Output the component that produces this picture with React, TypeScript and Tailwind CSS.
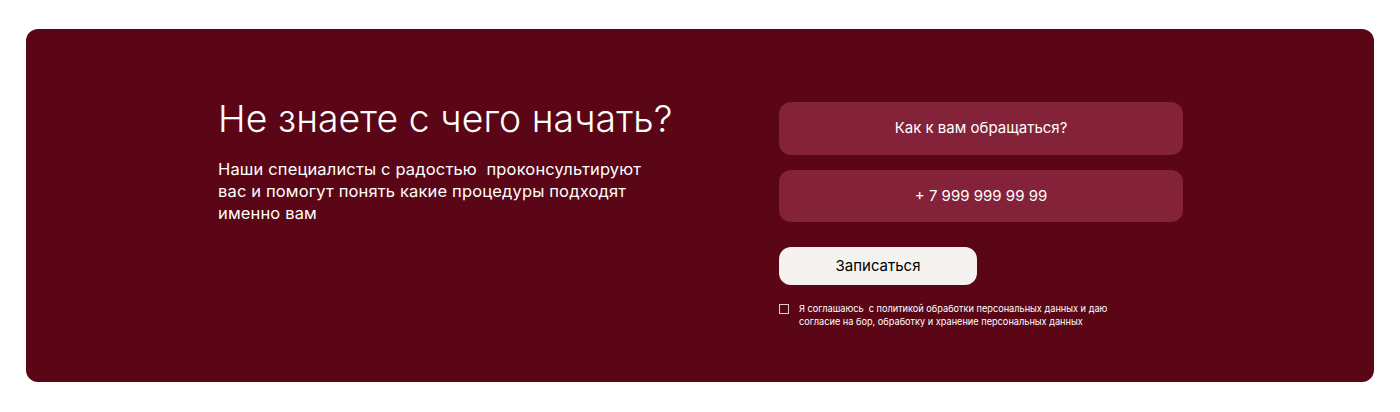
export default function App() {
  return (
    <div className="w-[1400px] h-[412px] bg-white pt-[29px] px-[26px]" style={{ fontFamily: "Inter, 'Noto Sans', sans-serif" }}>
      <div className="h-[353px] rounded-[12px] bg-[#5a0616] flex pl-[192px] pt-[73px]">
        <div className="w-[561px] -mt-[5px]">
          <h1 className="text-[37.3px] leading-[44px] font-light text-white tracking-[0.1px]">Не знаете с чего начать?</h1>
          <p className="mt-[17px] text-[16.5px] leading-[22px] text-white w-[430px] tracking-[0.15px]">
            Наши специалисты с радостью&nbsp; проконсультируют вас и помогут понять какие процедуры подходят именно вам
          </p>
        </div>
        <div className="flex flex-col">
          <div className="w-[404px] h-[53px] rounded-[12px] bg-[#84223a] flex items-center justify-center text-white text-[15px]">Как к вам обращаться?</div>
          <div className="mt-[15px] w-[404px] h-[52px] rounded-[12px] bg-[#84223a] flex items-center justify-center text-white text-[15px]">+ 7 999 999 99 99</div>
          <button className="mt-[25px] w-[198px] h-[38px] rounded-[12px] bg-[#f5f3ef] text-black text-[15px]">Записаться</button>
          <div className="mt-[18px] flex items-start gap-[10px]">
            <div className="mt-[1px] w-[10px] h-[10px] border border-white/80 shrink-0"></div>
            <p className="text-[9.2px] leading-[12.5px] text-white w-[320px]">
              Я соглашаюсь&nbsp; с политикой обработки персональных данных и даю согласие на бор, обработку и хранение персональных данных
            </p>
          </div>
        </div>
      </div>
    </div>
  );
}
